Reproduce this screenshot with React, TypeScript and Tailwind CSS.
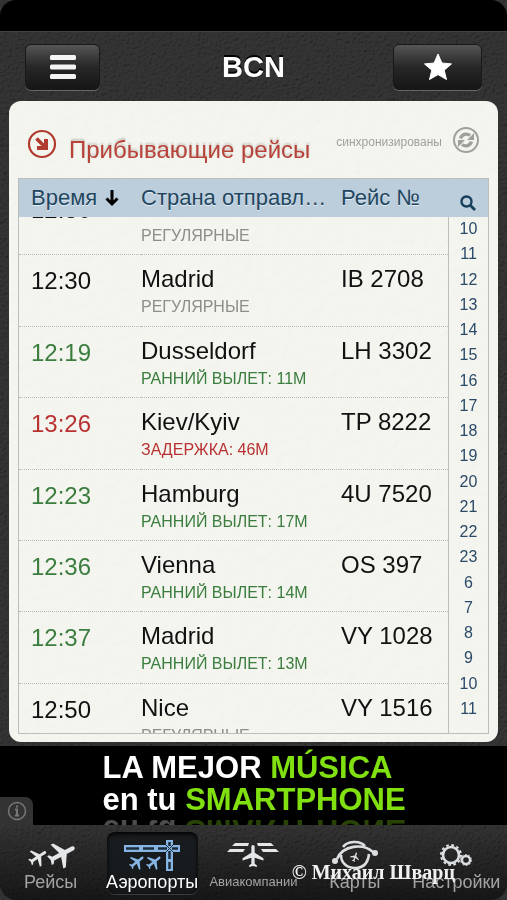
import { useLayoutEffect, useRef, useState } from "react";

type FlightStatus = "regular" | "early" | "delayed";

interface Flight {
  time: string;
  origin: string;
  number: string;
  status: FlightStatus;
  note: string;
}

const FLIGHTS: Flight[] = [
  { time: "12:30", origin: "Madrid", number: "IB 3708", status: "regular", note: "Регулярные" },
  { time: "12:30", origin: "Madrid", number: "IB 2708", status: "regular", note: "Регулярные" },
  { time: "12:19", origin: "Dusseldorf", number: "LH 3302", status: "early", note: "Ранний вылет: 11м" },
  { time: "13:26", origin: "Kiev/Kyiv", number: "TP 8222", status: "delayed", note: "Задержка: 46м" },
  { time: "12:23", origin: "Hamburg", number: "4U 7520", status: "early", note: "Ранний вылет: 17м" },
  { time: "12:36", origin: "Vienna", number: "OS 397", status: "early", note: "Ранний вылет: 14м" },
  { time: "12:37", origin: "Madrid", number: "VY 1028", status: "early", note: "Ранний вылет: 13м" },
  { time: "12:50", origin: "Nice", number: "VY 1516", status: "regular", note: "Регулярные" }
];

const HOURS = [10, 11, 12, 13, 14, 15, 16, 17, 18, 19, 20, 21, 22, 23, 6, 7, 8, 9, 10, 11];

const TIME_COLOR: Record<FlightStatus, string> = {
  regular: "text-[#111111]",
  early: "text-[#3b7d3e]",
  delayed: "text-[#b83232]"
};

const NOTE_COLOR: Record<FlightStatus, string> = {
  regular: "text-[#8d8e8a]",
  early: "text-[#3b7d3e]",
  delayed: "text-[#b83232]"
};

const PLANE_PATH =
  "M21 16v-2l-8-5V3.5c0-.83-.67-1.5-1.5-1.5S10 2.67 10 3.5V9l-8 5v2l8-2.5V19l-2 1.5V22l3.5-1 3.5 1v-1.5L13 19v-5.5l8 2.5z";

function Grain({ id, frequency, className }: { id: string; frequency: string; className: string }) {
  return (
    <svg aria-hidden="true" className={`pointer-events-none absolute inset-0 h-full w-full ${className}`}>
      <filter id={id} x="0" y="0" width="100%" height="100%">
        <feTurbulence type="fractalNoise" baseFrequency={frequency} numOctaves="3" seed="4" result="noise" />
        <feDiffuseLighting in="noise" lightingColor="#b4b4b4" surfaceScale="3">
          <feDistantLight azimuth="235" elevation="45" />
        </feDiffuseLighting>
      </filter>
      <rect width="100%" height="100%" filter={`url(#${id})`} />
    </svg>
  );
}

function FlightsIcon() {
  return (
    <svg viewBox="0 0 52 32" aria-hidden="true" className="h-8 w-[52px]" fill="#e4e6e8">
      <path d={PLANE_PATH} transform="translate(13 18) rotate(56) scale(.96) translate(-11.5 -12)" />
      <path d={PLANE_PATH} transform="translate(37 15) rotate(62) scale(1.42) translate(-11.5 -12)" />
    </svg>
  );
}

function AirportsIcon() {
  return (
    <svg viewBox="0 0 58 32" aria-hidden="true" className="h-8 w-[58px]">
      <g fill="#86b5e4">
        <path d="M1 6h42V1h7v5h7v7h-7v19h-7V13H1z" />
        <path d={PLANE_PATH} transform="translate(14 23) rotate(52) scale(.8) translate(-11.5 -12)" />
        <path d={PLANE_PATH} transform="translate(31 23) rotate(52) scale(.8) translate(-11.5 -12)" />
      </g>
      <path
        d="M3 9.500h13M20 9.500h11M35 9.500h9M49 9.500h6M46.500 3v4M46.500 12v8M46.500 23v7"
        stroke="#1b2b3b"
        strokeWidth="2.500"
      />
      <path d="M43 6l7 7M50 6l-7 7" stroke="#1b2b3b" strokeWidth="1" />
    </svg>
  );
}

function AirlinesIcon() {
  return (
    <svg viewBox="0 0 52 32" aria-hidden="true" className="h-8 w-[52px]" fill="#e4e6e8">
      <path d={PLANE_PATH} transform="translate(26 17) scale(1.1) translate(-11.5 -12)" />
      <path d="M8 4h14l-1 3H5zM3 10h15l-2 3H0zM30 4h14l3 3H31zM34 10h15l3 3H36z" />
    </svg>
  );
}

function MapsIcon() {
  return (
    <svg viewBox="0 0 52 32" aria-hidden="true" className="h-8 w-[52px]" fill="none" stroke="#dcdfe1" strokeWidth="2.600">
      <path d="M14 8C18 2 31 1 36 7M12 16c0 8 6 13 14 13s13-5 14-14M8 20C14 6 34 4 44 13" />
      <circle cx="6" cy="22" r="3" fill="#dcdfe1" stroke="none" />
      <circle cx="46" cy="14" r="3" fill="#dcdfe1" stroke="none" />
      <path
        d={PLANE_PATH}
        fill="#dcdfe1"
        stroke="none"
        transform="translate(26 18) rotate(20) scale(.48) translate(-11.5 -12)"
      />
    </svg>
  );
}

function SettingsIcon() {
  return (
    <svg viewBox="0 0 34 26" aria-hidden="true" className="h-[26px] w-[34px]" fill="none" stroke="#dcdfe1">
      <circle cx="12" cy="13" r="8" strokeWidth="2.600" />
      <circle cx="12" cy="13" r="10" strokeWidth="2" strokeDasharray="2.700 2.536" />
      <circle cx="27" cy="18" r="4" strokeWidth="2.400" />
      <circle cx="27" cy="18" r="5.500" strokeWidth="1" strokeDasharray="1.800 1.656" />
    </svg>
  );
}

const TABS = [
  { id: "flights", label: "Рейсы", size: "text-lg", Icon: FlightsIcon },
  { id: "airports", label: "Аэропорты", size: "text-lg", Icon: AirportsIcon },
  { id: "airlines", label: "Авиакомпании", size: "text-[13px]", Icon: AirlinesIcon },
  { id: "maps", label: "Карты", size: "text-lg", Icon: MapsIcon },
  { id: "settings", label: "Настройки", size: "text-lg", Icon: SettingsIcon }
];

function Toolbar() {
  const buttonClass =
    "flex h-[46px] items-center justify-center rounded-md border border-[#191919] bg-linear-to-b from-[#565656] via-[#272727] to-[#161616] shadow-[0_1px_0_#666]";

  return (
    <header className="relative grid h-[70px] shrink-0 grid-cols-[1fr_auto_1fr] items-center border-t border-[#444] px-[25px]">
      <button type="button" aria-label="Меню" className={`${buttonClass} w-[75px]`}>
        <svg viewBox="0 0 26 26" aria-hidden="true" className="h-[26px] w-[26px]" fill="#f4f4f4">
          <rect y="1" width="26" height="5" rx="1.500" />
          <rect y="10.500" width="26" height="5" rx="1.500" />
          <rect y="20" width="26" height="5" rx="1.500" />
        </svg>
      </button>
      <h1 className="text-[29px] leading-8 font-bold text-white [text-shadow:0_-2px_0_#000]">BCN</h1>
      <button type="button" aria-label="В избранное" className={`${buttonClass} w-[89px] justify-self-end`}>
        <svg viewBox="0 0 30 30" aria-hidden="true" className="h-[30px] w-[30px]" fill="#ffffff">
          <path
            d="m15 2 3.900 9 9.600.9-7.300 6.300 2.300 9.300L15 22.600l-8.500 4.900 2.300-9.300L1.500 11.900l9.600-.9z"
            stroke="#ffffff"
            strokeLinejoin="round"
          />
        </svg>
      </button>
    </header>
  );
}

function ArrivalsHeading() {
  return (
    <div className="flex h-[77px] shrink-0 items-center px-[9px]">
      <svg viewBox="0 0 30 30" aria-hidden="true" className="mt-2 h-[30px] w-[30px]" fill="none" stroke="#b03a2e">
        <circle cx="15" cy="15" r="13" strokeWidth="2.200" />
        <path d="m9.500 9.500 8.500 8.500" strokeWidth="3.500" />
        <path d="M19 10v9h-9" strokeWidth="4" />
      </svg>
      <h2 className="mt-5 ml-3 text-2xl whitespace-nowrap text-[#b8433a] [text-shadow:0_-2px_2px_#c9cac4]">
        Прибывающие рейсы
      </h2>
      <span className="ml-auto pt-1 text-xs text-[#a0a19e]">синхронизированы</span>
      <button type="button" aria-label="Обновить" className="ml-2.5">
        <svg viewBox="0 0 28 28" aria-hidden="true" className="h-7 w-7" fill="none" stroke="#9fa09d">
          <circle cx="14" cy="14" r="12" strokeWidth="2" />
          <path d="M8.500 12.500a6 6 0 0 1 9.500-3M19.500 15.500a6 6 0 0 1-9.500 3" strokeWidth="3.400" />
          <path d="M22 7v7h-7zM6 21v-7h7z" fill="#9fa09d" stroke="none" />
        </svg>
      </button>
    </div>
  );
}

function FlightRow({ flight }: { flight: Flight }) {
  return (
    <tr className="h-[71px] align-top">
      <td className="border-b border-dotted border-[#b9bab5] pt-2.5 pl-3 leading-8">
        <time className={TIME_COLOR[flight.status]}>{flight.time}</time>
      </td>
      <td className="border-b border-dotted border-[#b9bab5] pt-2 leading-8 text-[#111111]">
        {flight.origin}
        <div className={`text-base leading-6 uppercase ${NOTE_COLOR[flight.status]}`}>{flight.note}</div>
      </td>
      <td className="border-b border-dotted border-[#b9bab5] pt-2 leading-8 whitespace-nowrap text-[#111111]">
        {flight.number}
      </td>
    </tr>
  );
}

function ArrivalsBoard() {
  const scrollerRef = useRef<HTMLDivElement>(null);

  useLayoutEffect(() => {
    if (scrollerRef.current) {
      scrollerRef.current.scrollTop = 33;
    }
  }, []);

  return (
    <div className="flex min-h-0 flex-1 border border-[#bcbeb9]">
      <div ref={scrollerRef} className="min-w-0 flex-1 overflow-y-auto [scrollbar-width:none]">
        <table className="h-[609px] w-full table-fixed border-separate border-spacing-0 text-left text-2xl">
          <thead>
            <tr className="h-[38px] text-[22px] text-[#21465f] [text-shadow:0_1px_0_#e4edf5]">
              <th scope="col" className="sticky top-0 w-[122px] bg-[#bccddb] pl-3 font-normal">
                <span className="flex items-center gap-2">
                  Время
                  <svg viewBox="0 0 14 18" aria-hidden="true" className="h-[18px] w-[14px]" fill="none" stroke="#000000">
                    <path d="M7 1v14M1.500 9.500 7 15l5.500-5.500" strokeWidth="3" />
                  </svg>
                </span>
              </th>
              <th scope="col" className="sticky top-0 truncate bg-[#bccddb] pr-3 font-normal">
                Страна отправления
              </th>
              <th scope="col" className="sticky top-0 w-[107px] bg-[#bccddb] font-normal">
                Рейс №
              </th>
            </tr>
          </thead>
          <tbody>
            {FLIGHTS.map((flight) => (
              <FlightRow key={flight.number} flight={flight} />
            ))}
          </tbody>
        </table>
      </div>

      <nav aria-label="Часы" className="flex w-10 shrink-0 flex-col">
        <button type="button" aria-label="Поиск" className="flex h-[38px] shrink-0 items-center justify-center bg-[#bccddb] pt-2.5">
          <svg viewBox="0 0 16 16" aria-hidden="true" className="h-4 w-4" fill="none" stroke="#163f5c">
            <circle cx="6.500" cy="6.500" r="5" strokeWidth="2.400" />
            <path d="m10 10 5 5" strokeWidth="2.800" />
          </svg>
        </button>
        <div className="flex flex-1 flex-col items-center justify-between border-l border-[#bcbeb9] pt-1 pb-4 text-base leading-4 text-[#2b4a68]">
          {HOURS.map((hour, index) => (
            <button type="button" key={index}>
              {hour}
            </button>
          ))}
        </div>
      </nav>
    </div>
  );
}

function AdBanner() {
  return (
    <aside className="relative mt-1 h-[79px] shrink-0 overflow-hidden bg-black pt-1.5">
      <a href="#ad" className="mx-auto block w-[302px] text-[31px] leading-8 font-bold whitespace-nowrap text-white">
        <span className="block">
          LA MEJOR <span className="text-[#80e010]">MÚSICA</span>
        </span>
        <span className="block">
          en tu <span className="text-[#80e010]">SMARTPHONE</span>
        </span>
        <span aria-hidden="true" className="-mt-0.5 block -scale-y-100 opacity-30">
          en tu <span className="text-[#80e010]">SMARTPHONE</span>
        </span>
      </a>
      <button
        type="button"
        aria-label="О рекламе"
        className="absolute bottom-0 left-0 flex h-7 w-[33px] items-center justify-center rounded-tr-lg bg-[#333333]"
      >
        <svg viewBox="0 0 20 20" aria-hidden="true" className="h-5 w-5" fill="none" stroke="#777777">
          <circle cx="10" cy="10" r="8.500" strokeWidth="1.500" />
          <path d="M8 8.500h2v6M8 14.500h4M9 5.500h2" strokeWidth="2" />
        </svg>
      </button>
    </aside>
  );
}

function TabBar() {
  const [activeTab, setActiveTab] = useState("airports");

  return (
    <nav className="relative h-[75px] shrink-0 rounded-b-2xl bg-linear-to-b from-[#303030] to-[#151515]">
      <Grain id="bar-grain" frequency="0.35" className="rounded-b-2xl opacity-25 mix-blend-overlay" />
      <div className="relative grid h-full grid-cols-5 justify-items-center pt-[7px] pb-1.5">
        {TABS.map(({ id, label, size, Icon }) => (
          <button
            type="button"
            key={id}
            onClick={() => setActiveTab(id)}
            className={`flex w-[91px] flex-col items-center rounded-lg ${
              activeTab === id ? "bg-[#15191d]/80 text-white shadow-[inset_0_2px_4px_#000,0_1px_0_#3c3c3c]" : "text-[#a3a3a3]"
            }`}
          >
            <span className="flex h-[38px] items-center pt-2">
              <Icon />
            </span>
            <span className={`leading-6 whitespace-nowrap ${size}`}>{label}</span>
          </button>
        ))}
      </div>
    </nav>
  );
}

export default function App() {
  return (
    <div className="relative flex h-screen flex-col overflow-hidden bg-[#303030] font-['Liberation_Sans',Arial,sans-serif]">
      <Grain id="leather-grain" frequency="0.35" className="opacity-25 mix-blend-overlay" />
      <div className="relative h-[31px] shrink-0 rounded-t-2xl bg-black" />
      <Toolbar />
      <main className="relative mx-[9px] flex min-h-0 flex-1 flex-col rounded-xl bg-[#f3f4ee] px-[9px] pb-2">
        <Grain id="paper-grain" frequency="0.1" className="rounded-xl opacity-50 mix-blend-soft-light" />
        <div className="relative flex min-h-0 flex-1 flex-col">
          <ArrivalsHeading />
          <ArrivalsBoard />
        </div>
      </main>
      <AdBanner />
      <TabBar />
      <p className="absolute right-[52px] bottom-4 font-['Liberation_Serif',serif] text-xl leading-6 font-bold text-[#f0f0f0]">
        © Михаил Шварц
      </p>
    </div>
  );
}
